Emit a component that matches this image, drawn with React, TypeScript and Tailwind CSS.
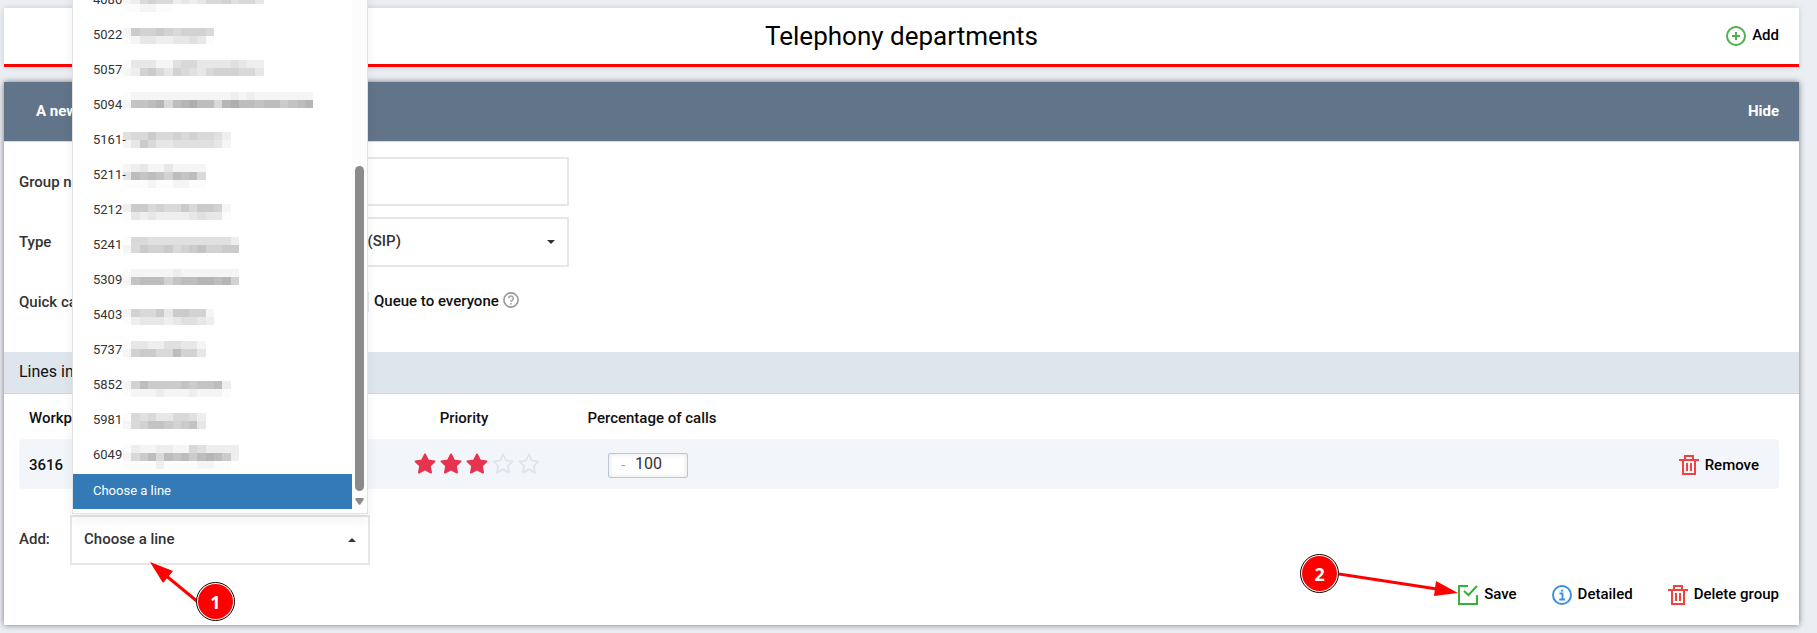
import { useState } from "react";

type Line = { number: string; dash?: boolean; top: number; rows: string[] };

// Each row of `rows` is one strip of the masked name, one hex digit per tile (f = white).
const lines: Line[] = [
  { number: "4080", top: 12, rows: ["eda9aadcdcaa9baac", "ffeeff"] },
  { number: "5022", top: 9, rows: ["e89989a999a", "feccddccbcf"] },
  { number: "5057", top: 6, rows: ["fccceebaaccccbcdd", "ed98ac9abca999aac"] },
  { number: "5094", top: 3, rows: ["feeeeeeeeeeeededeeeeeee", "e7765a65466a54667668765"] },
  { number: "5161", dash: true, top: 8, rows: ["baa8aa9a9aabd", "ec8accbbbbbce"] },
  { number: "5211", dash: true, top: 5, rows: ["edceeceeee", "c67679676a", "fffeffeeff"] },
  { number: "5212", top: 10, rows: ["d88a9aa8a889e", "fcdcddddcbccf"] },
  { number: "5241", top: 8, rows: ["faabbbbbbbbbbd", "ea8998a9879988"] },
  { number: "5309", top: 5, rows: ["feeeeedeeeeeee", "e7666976655659"] },
  { number: "5403", top: 10, rows: ["e9aa8c8899e", "fdcccdcbbcd"] },
  { number: "5737", top: 7, rows: ["fccddbbcce", "e988aa699c"] },
  { number: "5852", top: 12, rows: ["e96888878776d", "feeedeeedeeef"] },
  { number: "5981", top: 9, rows: ["fabaccaabd", "ea9778987c"] },
  { number: "6049", top: 6, rows: ["fdeeddeeabdddd", "ea86a67686568d", "ffffdffffeeff"] },
];

function MaskedName({ rows }: { rows: string[] }) {
  return (
    <svg width="200" height="24" aria-hidden="true" shapeRendering="crispEdges">
      {rows.map((row, y) =>
        row.split("").map((level, i) => {
          const shade = 252 - (15 - parseInt(level, 16)) * 7;
          const x = Math.round(i * 8.27);
          return (
            <rect
              key={`${y}-${i}`}
              x={x}
              y={y * 8}
              width={Math.round((i + 1) * 8.27) - x}
              height="8"
              fill={`rgb(${shade},${shade},${shade})`}
            />
          );
        })
      )}
    </svg>
  );
}

function TrashIcon() {
  return (
    <svg width="20" height="20" viewBox="0 0 20 20" fill="none" stroke="#f0423e" strokeWidth="2" aria-hidden="true">
      <path d="M0 5h20M6 5V1h8v4M4 5v14h12V5" />
      <path d="M8 8v8M12 8v8" />
    </svg>
  );
}

function SaveIcon() {
  return (
    <svg width="20" height="20" viewBox="0 0 20 20" fill="none" stroke="#35b23a" strokeWidth="2" aria-hidden="true">
      <path d="M10 1H1v18h18v-9" />
      <path d="M6 6l4.500 4L19 1" />
    </svg>
  );
}

function InfoIcon() {
  return (
    <svg width="20" height="20" viewBox="0 0 20 20" fill="none" stroke="#3a8ee6" aria-hidden="true">
      <circle cx="10" cy="10" r="9" strokeWidth="2" />
      <path d="M7.500 8.500H10.500V14.500M7.200 14.500H13" strokeWidth="1.800" />
      <path d="M9.200 5.600h2" strokeWidth="2" />
    </svg>
  );
}

function PlusIcon() {
  return (
    <svg width="20" height="20" viewBox="0 0 20 20" fill="none" stroke="#4caf50" strokeWidth="2" aria-hidden="true">
      <circle cx="10" cy="10" r="9" />
      <path d="M6 10h8M10 6v8" />
    </svg>
  );
}

function HelpIcon() {
  return (
    <svg width="16" height="16" viewBox="0 0 16 16" fill="none" stroke="#999" strokeWidth="1.700" aria-hidden="true">
      <circle cx="8" cy="8" r="7.100" />
      <path d="M5.700 6.300a2.300 2.200 0 1 1 3.400 1.900c-.8.500-1.100.8-1.100 1.700M8 11v1.500" stroke="#aaa" />
    </svg>
  );
}

function Star({ filled }: { filled: boolean }) {
  return (
    <svg
      width="22"
      height="22"
      viewBox="0 0 22 22"
      fill={filled ? "#e63350" : "none"}
      stroke={filled ? "#e63350" : "#dfe6ee"}
      strokeWidth="2"
      strokeLinejoin="round"
      aria-hidden="true"
    >
      <path d="M11 1.500l3 6 6.500.9-4.700 4.500 1.200 6.600L11 16.400l-6 3.100 1.200-6.600L1.500 8.400 8 7.500z" />
    </svg>
  );
}

function Caret({ up = false }: { up?: boolean }) {
  return (
    <svg width="8" height="4" viewBox="0 0 8 4" fill="#333" aria-hidden="true">
      <path d={up ? "M0 4l4-4 4 4z" : "M0 0l4 4 4-4z"} />
    </svg>
  );
}

function Badge({ children }: { children: string }) {
  return (
    <span className="flex size-[39px] items-center justify-center rounded-full border border-black bg-white p-px font-['Open_Sans',sans-serif] text-lg font-bold text-white">
      <span className="flex size-full items-center justify-center rounded-full bg-[#fe0000]">{children}</span>
    </span>
  );
}

function LinePicker() {
  const [open, setOpen] = useState(true);

  return (
    <div className="relative w-[300px]">
      <button
        id="line"
        type="button"
        aria-haspopup="listbox"
        aria-expanded={open}
        onClick={() => setOpen(!open)}
        className="flex h-[50px] w-full items-center justify-between border-2 border-[#e6e6e6] bg-white px-3 text-[#333]"
      >
        <span className="pb-0.5">Choose a line</span>
        <Caret up={open} />
      </button>
      {open && (
        <div className="absolute bottom-[51px] left-[2px] z-10 flex w-[296px] border border-[#e3e3e3] bg-white pb-1 shadow-[0_6px_12px_rgba(0,0,0,0.06)]">
          <ul role="listbox" aria-label="Lines" className="grow text-[13px] font-normal text-[#333]">
            {lines.map((line) => (
              <li key={line.number} role="option" aria-selected={false} className="relative flex h-[35px] items-center pb-1 pl-5">
                <span className="absolute left-[50px]" style={{ top: line.top }}>
                  <MaskedName rows={line.rows} />
                </span>
                <span className="relative">
                  {line.number}
                  {line.dash && "-"}
                </span>
              </li>
            ))}
            <li role="option" aria-selected className="flex h-[35px] items-center bg-[#337ab7] pb-0.5 pl-5 text-white">
              Choose a line
            </li>
          </ul>
          <div className="flex w-[15px] flex-col items-center justify-end gap-[7px] bg-[#fcfcfc] pb-1">
            <span className="h-[325px] w-[9px] rounded-full bg-[#8b8b8b]" />
            <svg width="9" height="7" viewBox="0 0 9 7" fill="#8b8b8b" aria-hidden="true">
              <path d="M1 0h7q1.200.500.500 1.800L5.500 6.200q-1 1.200-2 0L.5 1.800Q-.2.500 1 0z" />
            </svg>
          </div>
        </div>
      )}
      <div className="pointer-events-none absolute top-[47px] left-[80px] z-20">
        <svg width="50" height="42" aria-hidden="true">
          <path d="M14 12L48 40" stroke="#fe0000" strokeWidth="3" />
          <path d="M0 0l23 9-10 12z" fill="#fe0000" />
        </svg>
      </div>
      <div className="pointer-events-none absolute top-[67px] left-[126px] z-20">
        <Badge>1</Badge>
      </div>
    </div>
  );
}

export default function App() {
  const [percent, setPercent] = useState("100");

  return (
    <div className="min-h-screen overflow-hidden bg-[#ebeef3] pt-2 pr-[18px] pb-2 pl-1 font-[Roboto,sans-serif] text-[15px] leading-5 font-medium text-[#111]">
      <header className="grid h-[59px] grid-cols-[1fr_auto_1fr] items-center border-b-3 border-[#fe0000] bg-white px-5 shadow-[0_0_6px_rgba(0,0,0,0.15)]">
        <h1 className="col-start-2 text-[26px] leading-8 font-normal text-black">Telephony departments</h1>
        <button type="button" className="flex items-center gap-1.5 justify-self-end text-black">
          <PlusIcon />
          <span className="pb-0.5">Add</span>
        </button>
      </header>

      <section className="mt-[15px] bg-white shadow-[0_0_6px_rgba(0,0,0,0.5)]">
        <div className="flex h-[60px] items-center justify-between border-b border-[#d5dae0] bg-[#627489] pr-5 pb-0.5 pl-8 font-bold text-white">
          <h2>A new group</h2>
          <button type="button">Hide</button>
        </div>

        <form onSubmit={(e) => e.preventDefault()}>
          <div className="grid grid-cols-[252px_298px] gap-y-[11px] pt-[15px] pb-[26px] pl-[15px] text-[#333]">
            <label htmlFor="group-name" className="self-center">Group name</label>
            <input id="group-name" className="h-[49px] border-2 border-[#e6e6e6] px-3" />

            <label htmlFor="type" className="self-center">Type</label>
            <div className="grid items-center">
              <select id="type" className="col-start-1 row-start-1 h-[50px] appearance-none border-2 border-[#e6e6e6] bg-white pb-0.5 pl-5">
                <option>Workplace (SIP)</option>
              </select>
              <span className="pointer-events-none col-start-1 row-start-1 mr-3.5 justify-self-end">
                <Caret />
              </span>
            </div>

            <span className="self-center">Quick call</span>
            <div className="flex h-[48px] items-center pl-[78px] text-[#111]">
              <input id="queue" type="checkbox" className="size-5 appearance-none border-2 border-[#e6e6e6] bg-white" />
              <label htmlFor="queue" className="pb-0.5 pl-[5px] whitespace-nowrap">Queue to everyone</label>
              <button type="button" aria-label="Help" className="ml-1 pb-1">
                <HelpIcon />
              </button>
            </div>
          </div>

          <h3 className="flex h-[42px] items-center border-b border-[#d2d6da] bg-[#dee5ed] pb-0.5 pl-[15px] text-base font-normal text-[#111]">
            Lines in group
          </h3>

          <div className="pr-5 pl-[15px]">
            <table className="w-full table-fixed">
              <thead>
                <tr className="h-[45px]">
                  <th className="w-[351px] pt-0.5 pl-2.5 text-left font-medium">Workplace</th>
                  <th className="w-[188px] pt-0.5 font-medium">Priority</th>
                  <th className="w-[188px] pt-0.5 font-medium">Percentage of calls</th>
                  <th aria-label="Actions" />
                </tr>
              </thead>
              <tbody>
                <tr className="h-[50px]">
                  <td className="rounded-l bg-[#f2f6fa] pt-0.5 pl-2.5">3616</td>
                  <td className="bg-[#f2f6fa]">
                    <div className="flex gap-1 pl-11" role="img" aria-label="Priority 3 of 5">
                      {[1, 2, 3, 4, 5].map((n) => (
                        <Star key={n} filled={n <= 3} />
                      ))}
                    </div>
                  </td>
                  <td className="bg-[#f2f6fa] pl-[50px]">
                    <div className="mt-0.5 flex h-[25px] w-[80px] items-center rounded-xs border border-[#bfc7d2] bg-white pl-3 shadow-[inset_0_0_5px_rgba(0,0,0,0.12)]">
                      <span className="w-[14px] font-normal text-[#96a6b8]">-</span>
                      <input
                        aria-label="Percentage of calls"
                        value={percent}
                        onChange={(e) => setPercent(e.target.value)}
                        className="w-10 bg-transparent pb-0.5 text-base font-normal text-[#333] outline-none"
                      />
                    </div>
                  </td>
                  <td className="rounded-r bg-[#f2f6fa] pt-0.5 pr-5">
                    <button type="button" className="ml-auto flex items-center gap-1.5 text-black">
                      <TrashIcon />
                      Remove
                    </button>
                  </td>
                </tr>
              </tbody>
            </table>
          </div>

          <div className="mt-[26px] flex items-center pl-[15px]">
            <label htmlFor="line" className="w-[51px] pb-0.5 text-[#333]">Add:</label>
            <LinePicker />
          </div>

          <div className="flex h-[60px] items-center justify-end gap-[35px] pr-5 text-black">
            <div className="relative">
              <button type="submit" className="flex items-center gap-1.5">
                <SaveIcon />
                <span className="pb-0.5">Save</span>
              </button>
              <div className="pointer-events-none absolute -top-[30px] right-full flex">
                <Badge>2</Badge>
                <svg width="119" height="55" aria-hidden="true">
                  <path d="M0 20L98 35" stroke="#fe0000" strokeWidth="3" />
                  <path d="M119 39l-22-12-2 15z" fill="#fe0000" />
                </svg>
              </div>
            </div>
            <button type="button" className="flex items-center gap-1.5">
              <InfoIcon />
              <span className="pb-0.5">Detailed</span>
            </button>
            <button type="button" className="flex items-center gap-1.5">
              <TrashIcon />
              <span className="pb-0.5">Delete group</span>
            </button>
          </div>
        </form>
      </section>
    </div>
  );
}
